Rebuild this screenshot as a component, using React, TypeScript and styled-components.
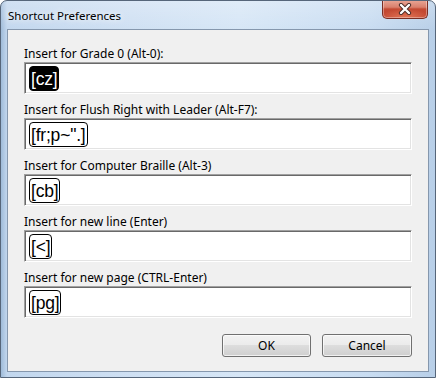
import React from "react";
import styled, { createGlobalStyle } from "styled-components";

const Global = createGlobalStyle`
  html, body { margin: 0; padding: 0; background: #ffffff; }
  body { font-family: "Noto Sans", "Liberation Sans", Arial, sans-serif; }
  * { box-sizing: border-box; }
`;

const Window = styled.div`
  width: 436px;
  height: 378px;
  border: 1px solid #56667a;
  border-radius: 7px 7px 0 0;
  background:
    linear-gradient(to bottom, rgba(255,255,255,0.25), rgba(255,255,255,0) 30px),
    linear-gradient(to right, #9fbbd9 0px, #c2d7ee 6px, #cfe0f3 30%, #d6e6f6 55%, #c8dcf1 85%, #b8cfe8 100%);
  padding: 0 6px 5px 6px;
  display: flex;
  flex-direction: column;
  overflow: hidden;
`;

const TitleBar = styled.div`
  height: 28px;
  display: flex;
  justify-content: space-between;
  align-items: flex-start;
  padding-left: 1px;
  padding-right: 1px;
`;

const Title = styled.div`
  margin-top: 7px;
  font-family: "Noto Sans", "Liberation Sans", Arial, sans-serif;
  font-size: 11.5px;
  line-height: 16px;
  color: #000;
  text-shadow: 0 0 6px rgba(255,255,255,0.9), 0 0 10px rgba(255,255,255,0.7);
`;

const CloseButton = styled.div`
  width: 46px;
  height: 19px;
  margin-top: -1px;
  border: 1px solid #7a2e24;
  border-top: none;
  border-radius: 0 0 5px 5px;
  background:
    radial-gradient(ellipse 60% 50% at 50% 100%, rgba(255,160,120,0.55), rgba(255,160,120,0) 100%),
    linear-gradient(to bottom, #e9a797 0%, #d9806d 40%, #c44a33 50%, #c24530 100%);
  box-shadow: inset 0 0 0 1px rgba(255,255,255,0.35);
  display: flex;
  align-items: center;
  justify-content: center;
`;

const Client = styled.div`
  height: 343px;
  border: 1px solid #8597ad;
  background: #f0f0f0;
  padding: 16px 16px 0 16px;
  display: flex;
  flex-direction: column;
`;

const Fields = styled.div`
  display: flex;
  flex-direction: column;
  gap: 8px;
`;

const Field = styled.div`
  display: flex;
  flex-direction: column;
`;

const Label = styled.div`
  font-family: "Noto Sans", "Liberation Sans", Arial, sans-serif;
  font-size: 12px;
  line-height: 16px;
  height: 16px;
  color: #000;
`;

const TextBox = styled.div`
  height: 32px;
  width: 388px;
  background: #fff;
  border-top: 1px solid #a0a0a0;
  border-left: 1px solid #a0a0a0;
  border-right: 1px solid #ffffff;
  border-bottom: 1px solid #ffffff;
  box-shadow: inset 1px 1px 0 #696969, inset -1px -1px 0 #e3e3e3;
  padding: 3px 3px 2px 4px;
  display: flex;
  align-items: stretch;
`;

const Token = styled.span<{ $selected?: boolean }>`
  display: inline-flex;
  align-items: center;
  padding: 0 1px;
  border: 1px solid #000;
  border-radius: 4px;
  font-family: "Liberation Sans", Arial, sans-serif;
  font-size: 17.5px;
  line-height: 20px;
  background: ${(p) => (p.$selected ? "#000" : "#fff")};
  color: ${(p) => (p.$selected ? "#ffffff" : "#000")};
  letter-spacing: -0.2px;
`;

const ButtonRow = styled.div`
  margin-top: 16px;
  display: flex;
  justify-content: flex-end;
  gap: 11px;
`;

const Button = styled.button<{ $w: number }>`
  width: ${(p) => p.$w}px;
  height: 23px;
  border: 1px solid #707070;
  border-radius: 3px;
  background: linear-gradient(to bottom, #f2f2f2 0%, #ebebeb 50%, #dddddd 50%, #cfcfcf 100%);
  box-shadow: inset 0 0 0 1px rgba(255,255,255,0.7);
  font-family: "Noto Sans", "Liberation Sans", Arial, sans-serif;
  font-size: 12px;
  color: #000;
  padding: 0;
`;

const fields = [
  { label: "Insert for Grade 0 (Alt-0):", token: "[cz]", selected: true },
  { label: "Insert for Flush Right with Leader (Alt-F7):", token: "[fr;p~\".]" },
  { label: "Insert for Computer Braille (Alt-3)", token: "[cb]" },
  { label: "Insert for new line (Enter)", token: "[<]" },
  { label: "Insert for new page (CTRL-Enter)", token: "[pg]" },
];

export default function App() {
  return (
    <>
      <Global />
      <Window>
        <TitleBar>
          <Title>Shortcut Preferences</Title>
          <CloseButton>
            <svg width="14" height="12" viewBox="0 0 14 12">
              <path d="M3 2 L11 10 M11 2 L3 10" stroke="#4a2a26" strokeWidth="4.2" strokeLinecap="round" />
              <path d="M3 2 L11 10 M11 2 L3 10" stroke="#ffffff" strokeWidth="2.4" strokeLinecap="round" />
            </svg>
          </CloseButton>
        </TitleBar>
        <Client>
          <Fields>
            {fields.map((f) => (
              <Field key={f.label}>
                <Label>{f.label}</Label>
                <TextBox>
                  <Token $selected={f.selected}>{f.token}</Token>
                </TextBox>
              </Field>
            ))}
          </Fields>
          <ButtonRow>
            <Button $w={89}>OK</Button>
            <Button $w={90}>Cancel</Button>
          </ButtonRow>
        </Client>
      </Window>
    </>
  );
}
